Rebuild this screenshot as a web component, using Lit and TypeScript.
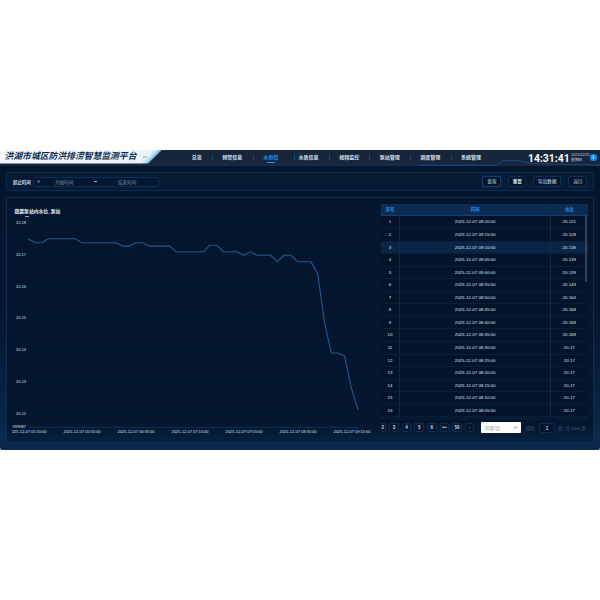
import { LitElement, html, css, svg } from "lit";
import { customElement } from "lit/decorators.js";

const VALUES = [
  20.175, 20.1738, 20.1738, 20.175, 20.175, 20.175, 20.175, 20.175, 20.1738, 20.1738, 20.1738, 20.1738, 20.1738, 20.1738,
  20.1727, 20.1727, 20.1738, 20.1738, 20.1727, 20.1727, 20.1727, 20.1727, 20.1709, 20.1709, 20.1709, 20.1709, 20.1709,
  20.173, 20.173, 20.1709, 20.1709, 20.1709, 20.1698, 20.1709, 20.1698, 20.1698, 20.1698, 20.1678, 20.1698, 20.1698,
  20.1678, 20.1678, 20.1678, 20.164, 20.149, 20.139, 20.139, 20.138, 20.128, 20.121,
];
const ROWS: [string, string][] = [
  ["09:20:00", "20.121"], ["09:15:00", "20.128"], ["09:10:00", "20.138"], ["09:05:00", "20.139"],
  ["09:00:00", "20.139"], ["08:55:00", "20.149"], ["08:50:00", "20.164"], ["08:45:00", "20.168"],
  ["08:40:00", "20.168"], ["08:35:00", "20.168"], ["08:30:00", "20.17"], ["08:25:00", "20.17"],
  ["08:20:00", "20.17"], ["08:15:00", "20.17"], ["08:10:00", "20.17"], ["08:05:00", "20.17"],
];
const NAV = ["总览", "预警信息", "水雨情", "水质信息", "视频监控", "泵站管理", "调度管理", "系统管理"];
const Y_TICKS = ["20.18", "20.17", "20.16", "20.15", "20.14", "20.13", "20.12"];
const X_TICKS = ["05:15:00", "05:55:00", "06:35:00", "07:15:00", "07:55:00", "08:35:00", "09:15:00"];

const xOf = (i: number) => 16.3 + i * 6.73;
const yOf = (v: number) => 23 + (20.18 - v) * 3170;

@customElement("trend-chart")
class TrendChart extends LitElement {
  static styles = css`
    :host { display: block; flex: none; width: 368px; }
    svg { display: block; }
    .tick { font: 4px "Liberation Sans", sans-serif; fill: #d5e0ec; }
    .grid { stroke: #08203c; stroke-width: 0.5; }
    .axis { stroke: #17406a; stroke-width: 0.6; }
    .line { fill: none; stroke: #22598f; stroke-width: 1.1; stroke-linejoin: round; }
  `;
  render() {
    const pts = VALUES.map((v, i) => `${xOf(i).toFixed(1)},${yOf(v).toFixed(1)}`).join(" ");
    return html`<svg width="368" height="240" viewBox="0 0 368 240">
      ${Y_TICKS.map((t, i) => {
        const y = 23 + i * 31.7;
        return svg`<line class="grid" x1="16" x2="356" y1=${y} y2=${y}></line>
          <text class="tick" x="9" y=${y + 1.3} text-anchor="middle">${t}</text>`;
      })}
      <line class="axis" x1="16" x2="346" y1="227.3" y2="227.3"></line>
      <polyline class="line" points=${pts}></polyline>
      <text class="tick" x="0.5" y="228">999987</text>
      ${X_TICKS.map((t, i) => svg`<text class="tick" x=${16 + i * 54} y="233" text-anchor="middle">2025-12-07 ${t}</text>`)}
    </svg>`;
  }
}

@customElement("app-root")
class AppRoot extends LitElement {
  static styles = css`
    :host {
      display: block; height: 600px; box-sizing: border-box; padding-top: 150px; background: #fff;
      font-family: "Liberation Sans", "Noto Sans CJK SC", sans-serif;
    }
    .frame { height: 300px; display: flex; flex-direction: column; overflow: hidden; border-radius: 0 0 2px 2px;
      background: linear-gradient(#04162c 0%, #04172f 55%, #0b2a4c 100%); }

    .head { height: 15.5px; flex: none; background: #17263a; position: relative; display: flex; }
    .trim { position: absolute; left: 0; top: 0; width: 600px; height: 16px; pointer-events: none; }
    .trim polyline { fill: none; stroke: #0e3563; stroke-width: 0.8; }
    .trim .hot { stroke: #1c4f96; }
    .brand {
      width: 162px; height: 13.5px; flex: none; display: flex; align-items: center; padding-left: 4.5px; box-sizing: border-box;
      background: linear-gradient(135deg, #f5f9fd 0%, #e8f4fb 87%, #b4dcf4 90%, #5c9fd0 92%);
      clip-path: polygon(0 0, 100% 0, 91.5% 100%, 0 100%);
      color: #0c2b49; font-size: 8.8px; font-weight: 700; font-style: italic; white-space: nowrap; line-height: 1;
    }
    .dot { width: 1.6px; height: 1.6px; border-radius: 50%; background: #a8d858; margin-left: 7px; box-shadow: 2px 0 0 #9fc3d8; flex: none; }
    .nav { display: flex; margin-left: 19.7px; height: 100%; }
    .nav a { position: relative; box-sizing: border-box; width: 40.6px; padding-right: 10.3px; text-align: right; font-size: 5px; color: #d7e3ef; font-weight: 700; line-height: 15.5px; white-space: nowrap; flex: none; }
    .nav a.n0 { width: 30.3px; }
    .nav a.n3 { width: 35.3px; }
    .nav a + a::before { content: ""; position: absolute; left: 0; top: 5px; width: 0.6px; height: 5px; background: #1f4a72; }
    .nav a.on { width: 41px; padding: 0 0 0 10.6px; text-align: left; color: #2a8df0; }
    .nav a.on::after { content: ""; position: absolute; left: 14.3px; top: 11.8px; width: 8px; height: 1px; background: #1e90ff; }
    .clock { position: absolute; left: 528px; top: 0; height: 15.5px; display: flex; align-items: center; color: #fff; }
    .time { font: 700 10.4px Roboto, sans-serif; white-space: nowrap; width: 43px; margin-top: 1px; }
    .date { font-size: 3.7px; line-height: 4.6px; color: #c8d6e4; white-space: nowrap; }
    .user { position: absolute; left: 590px; top: 4px; width: 6.5px; height: 6.5px; border-radius: 50%; background: #1a8cf0; color: #fff; font-size: 5px; font-weight: 700; text-align: center; line-height: 6.5px; }

    .body { flex: 1; display: flex; flex-direction: column; gap: 6px; padding: 6.5px 6px 7px; min-height: 0; }
    .filter { height: 19px; flex: none; display: flex; align-items: center; padding: 0 5.7px 0 6px; background: #051a33; border: 1px solid #0b2c50; border-radius: 3px; box-sizing: border-box; }
    .label { font-size: 4.45px; font-weight: 700; color: #d2deea; white-space: nowrap; width: 18px; margin-right: 2px; flex: none; }
    .range { width: 125.7px; height: 10px; border: 1px solid #0c2f55; border-radius: 2px; box-sizing: border-box; display: flex; align-items: center; background: #041730; color: #7890a8; font-size: 4.6px; white-space: nowrap; flex: none; }
    .clockic { width: 3.5px; height: 3.5px; border: 0.6px solid #67809b; border-radius: 50%; margin-left: 2.5px; box-sizing: border-box; flex: none; }
    .s { margin-left: 15px; width: 18.4px; flex: none; }
    .dash { margin-left: 20.6px; width: 3px; height: 0.8px; background: #9db0c4; flex: none; }
    .t { margin-left: 21px; flex: none; }
    .btns { margin-left: auto; display: flex; gap: 7px; }
    .btn { height: 10.3px; border: 1px solid #0d2f55; border-radius: 2px; background: #04142a; color: #d7e3ef; font-size: 4.6px; box-sizing: border-box; white-space: nowrap; display: flex; align-items: center; justify-content: center; width: 19px; }
    .btn.q { border-color: #123f6e; box-shadow: 0 0 1.5px #124a85; }
    .btn.r { width: 18px; font-weight: 700; }
    .btn.e { width: 28px; }
    .btn.b { color: #aebccb; }

    .main { flex: 1; min-height: 0; display: flex; box-sizing: border-box; padding: 2px 5.5px 0 5px; position: relative; border-radius: 3px; border: 1px solid #0c2e54; border-bottom-width: 1.5px; background: linear-gradient(#04162e 0%, #04162e 92%, #06203d 100%); }
    .ctitle { position: absolute; left: 7.5px; top: 10.5px; font-size: 4.8px; font-weight: 700; color: #e6eef6; white-space: nowrap; z-index: 1; line-height: 6px; }
    .ctitle::after { content: ""; display: block; width: 4px; height: 0.7px; background: #8fa8c0; margin: 1.5px 0 0 10.5px; }
    .side { width: 207px; flex: none; padding-top: 3.8px; margin-left: 0.7px; display: flex; flex-direction: column; }
    .tbl { position: relative; padding-bottom: 2px; box-shadow: inset 0 0 0 0.5px #0b2543; }
    .tr { display: grid; grid-template-columns: 18.6px 1fr 37.8px; height: 12.55px; font-size: 4.4px; color: #dde6ef; text-align: center; line-height: 12.4px; border-bottom: 0.5px solid #081f3a; box-sizing: border-box; background: #041329; }
    .tr > span + span { border-left: 0.5px solid #0b2b4e; }
    .tr.th { background: #0b2d52; color: #2a8df0; height: 12.7px; font-weight: 700; border-bottom: 0.5px solid #114172; }
    .tr.on { background: #0a2647; }
    .bar { position: absolute; right: 1px; top: 12.7px; width: 1.5px; height: 65.7px; background: #304358; }
    .pager { height: 10.6px; display: flex; align-items: center; margin-top: 3px; font-size: 4.6px; color: #cdd9e6; white-space: nowrap; }
    .pg { width: 9.6px; height: 9.6px; margin-right: 3px; border: 0.5px solid #0c2c50; background: #04152c; border-radius: 1.5px; text-align: center; line-height: 8.8px; box-sizing: border-box; flex: none; font-weight: 700; }
    .pg.first { width: 5px; margin-right: 3.5px; border-left: 0; border-radius: 0 1.5px 1.5px 0; }
    .pg.next { margin-right: 6.3px; color: #425a75; }
    .size { width: 40px; height: 10.6px; background: #fff; color: #8d97a3; margin-right: 5.3px; display: flex; align-items: center; justify-content: space-between; padding: 0 4px; box-sizing: border-box; flex: none; border-radius: 1px; }
    .size i { width: 2px; height: 2px; border: solid #b0b7c0; border-width: 0 0.5px 0.5px 0; transform: rotate(45deg) translate(-0.5px, -0.5px); }
    .dim { color: #425a75; }
    .jump { width: 16.6px; height: 10px; margin: 0 2.7px 0 3.7px; border: 0.5px solid #0c2c50; background: #04152c; text-align: center; line-height: 9px; box-sizing: border-box; border-radius: 1.5px; flex: none; font-weight: 700; }
    .total { margin-left: 3px; font-size: 4.2px; }
  `;
  render() {
    return html`<div class="frame">
      <header class="head">
        <div class="brand">洪湖市城区防洪排涝智慧监测平台<i class="dot"></i></div>
        <nav class="nav">
          ${NAV.map((n, i) => html`<a class="n${i} ${n === "水雨情" ? "on" : ""}">${n}</a>`)}
        </nav>
        <div class="clock">
          <div class="time">14:31:41</div>
          <div class="date">2025/12/25<br />星期四</div>
        </div>
        <div class="user">i</div>
        <svg class="trim" viewBox="0 0 600 16">
          <polyline points="150,15.2 497,15.2"></polyline>
          <polyline class="hot" points="420,15.2 497,15.2 503,10.5 517,10.5 530,13.5 600,15.2"></polyline>
        </svg>
      </header>
      <div class="body">
        <section class="filter">
          <span class="label">起止时间</span>
          <div class="range">
            <i class="clockic"></i>
            <span class="s">开始时间</span>
            <i class="dash"></i>
            <span class="t">结束时间</span>
          </div>
          <div class="btns">
            <div class="btn q">查询</div>
            <div class="btn r">重置</div>
            <div class="btn e">导出数据</div>
            <div class="btn b">返回</div>
          </div>
        </section>
        <section class="main">
          <div class="ctitle">蔬菜泵站内水位_泵站</div>
          <trend-chart></trend-chart>
          <div class="side">
            <div class="tbl">
              <div class="tr th"><span>序号</span><span>时间</span><span>水位</span></div>
              ${ROWS.map(
                (r, i) => html`<div class="tr ${i === 2 ? "on" : ""}"><span>${i + 1}</span><span>2025-12-07 ${r[0]}</span><span>${r[1]}</span></div>`
              )}
              <div class="bar"></div>
            </div>
            <div class="pager">
              <div class="pg first">2</div>
              ${["3", "4", "5", "6", "•••", "50"].map((p) => html`<div class="pg">${p}</div>`)}
              <div class="pg next">›</div>
              <div class="size"><span>50条/页</span><i></i></div>
              <span class="dim">前往</span>
              <div class="jump">1</div>
              <span class="dim">页</span>
              <span class="dim total">共 2406 条</span>
            </div>
          </div>
        </section>
      </div>
    </div>`;
  }
}
